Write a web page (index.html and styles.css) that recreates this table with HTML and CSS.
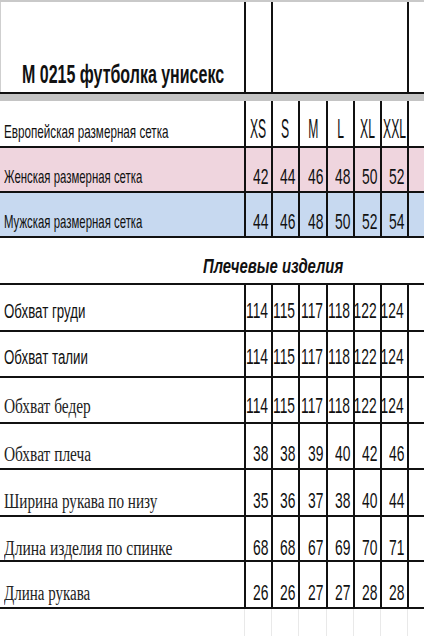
FILE: index.html
```html
<!DOCTYPE html>
<html lang="ru">
<head>
<meta charset="utf-8">
<title>М 0215 футболка унисекс</title>
<link rel="stylesheet" href="styles.css">
</head>
<body>
<div class="sheet">
  <div class="row title-row">
    <div class="cell title-cell"><span class="t title">М 0215 футболка унисекс</span></div>
    <div class="cell vline"></div>
    <div class="cell vline span5"></div>
    <div class="cell vline"></div>
  </div>
  <div class="band"></div>

  <div class="row h47 o-eu">
    <div class="cell lab-cell"><span class="t lab w-eu">Европейская размерная сетка</span></div>
    <div class="cell sz-cell"><span class="t sz">XS</span></div>
    <div class="cell sz-cell"><span class="t sz">S</span></div>
    <div class="cell sz-cell"><span class="t sz">M</span></div>
    <div class="cell sz-cell"><span class="t sz">L</span></div>
    <div class="cell sz-cell"><span class="t sz">XL</span></div>
    <div class="cell sz-cell"><span class="t sz">XXL</span></div>
    <div class="cell vline"></div>
  </div>

  <div class="row h45 pink o7">
    <div class="cell lab-cell"><span class="t lab">Женская размерная сетка</span></div>
    <div class="cell num"><span class="t n">42</span></div>
    <div class="cell num"><span class="t n">44</span></div>
    <div class="cell num"><span class="t n">46</span></div>
    <div class="cell num"><span class="t n">48</span></div>
    <div class="cell num"><span class="t n">50</span></div>
    <div class="cell num"><span class="t n">52</span></div>
    <div class="cell vline"></div>
  </div>

  <div class="row h45 blue o7">
    <div class="cell lab-cell"><span class="t lab">Мужская размерная сетка</span></div>
    <div class="cell num"><span class="t n">44</span></div>
    <div class="cell num"><span class="t n">46</span></div>
    <div class="cell num"><span class="t n">48</span></div>
    <div class="cell num"><span class="t n">50</span></div>
    <div class="cell num"><span class="t n">52</span></div>
    <div class="cell num"><span class="t n">54</span></div>
    <div class="cell vline"></div>
  </div>

  <div class="row h47 section">
    <div class="cell section-cell"><span class="t sec">Плечевые изделия</span></div>
  </div>

  <div class="row h47 o3">
    <div class="cell lab-cell"><span class="t lab2">Обхват груди</span></div>
    <div class="cell num"><span class="t n">114</span></div>
    <div class="cell num"><span class="t n">115</span></div>
    <div class="cell num"><span class="t n">117</span></div>
    <div class="cell num"><span class="t n">118</span></div>
    <div class="cell num"><span class="t n">122</span></div>
    <div class="cell num"><span class="t n">124</span></div>
    <div class="cell vline"></div>
  </div>

  <div class="row h46 o3">
    <div class="cell lab-cell"><span class="t lab2">Обхват талии</span></div>
    <div class="cell num"><span class="t n">114</span></div>
    <div class="cell num"><span class="t n">115</span></div>
    <div class="cell num"><span class="t n">117</span></div>
    <div class="cell num"><span class="t n">118</span></div>
    <div class="cell num"><span class="t n">122</span></div>
    <div class="cell num"><span class="t n">124</span></div>
    <div class="cell vline"></div>
  </div>

  <div class="row h46 o6">
    <div class="cell lab-cell"><span class="t serif">Обхват бедер</span></div>
    <div class="cell num"><span class="t n">114</span></div>
    <div class="cell num"><span class="t n">115</span></div>
    <div class="cell num"><span class="t n">117</span></div>
    <div class="cell num"><span class="t n">118</span></div>
    <div class="cell num"><span class="t n">122</span></div>
    <div class="cell num"><span class="t n">124</span></div>
    <div class="cell vline"></div>
  </div>

  <div class="row h46 o8">
    <div class="cell lab-cell"><span class="t serif">Обхват плеча</span></div>
    <div class="cell num"><span class="t n">38</span></div>
    <div class="cell num"><span class="t n">38</span></div>
    <div class="cell num"><span class="t n">39</span></div>
    <div class="cell num"><span class="t n">40</span></div>
    <div class="cell num"><span class="t n">42</span></div>
    <div class="cell num"><span class="t n">46</span></div>
    <div class="cell vline"></div>
  </div>

  <div class="row h47 o8">
    <div class="cell lab-cell"><span class="t serif w-shirina">Ширина рукава по низу</span></div>
    <div class="cell num"><span class="t n">35</span></div>
    <div class="cell num"><span class="t n">36</span></div>
    <div class="cell num"><span class="t n">37</span></div>
    <div class="cell num"><span class="t n">38</span></div>
    <div class="cell num"><span class="t n">40</span></div>
    <div class="cell num"><span class="t n">44</span></div>
    <div class="cell vline"></div>
  </div>

  <div class="row h45 o9">
    <div class="cell lab-cell"><span class="t serif w-dlina">Длина изделия по спинке</span></div>
    <div class="cell num"><span class="t n">68</span></div>
    <div class="cell num"><span class="t n">68</span></div>
    <div class="cell num"><span class="t n">67</span></div>
    <div class="cell num"><span class="t n">69</span></div>
    <div class="cell num"><span class="t n">70</span></div>
    <div class="cell num"><span class="t n">71</span></div>
    <div class="cell vline"></div>
  </div>

  <div class="row h47 o8">
    <div class="cell lab-cell"><span class="t serif w-rukav">Длина рукава</span></div>
    <div class="cell num"><span class="t n">26</span></div>
    <div class="cell num"><span class="t n">26</span></div>
    <div class="cell num"><span class="t n">27</span></div>
    <div class="cell num"><span class="t n">27</span></div>
    <div class="cell num"><span class="t n">28</span></div>
    <div class="cell num"><span class="t n">28</span></div>
    <div class="cell vline"></div>
  </div>

  <div class="row faint">
    <div class="cell"></div>
    <div class="cell fline"></div>
    <div class="cell fline"></div>
    <div class="cell fline"></div>
    <div class="cell fline"></div>
    <div class="cell fline"></div>
    <div class="cell fline"></div>
    <div class="cell fline"></div>
  </div>
</div>
</body>
</html>
```

FILE: styles.css
```css
html, body {
  margin: 0;
  padding: 0;
  background: #ffffff;
}

.sheet {
  width: 424px;
  height: 636px;
  overflow: hidden;
  font-family: "Liberation Sans", Arial, sans-serif;
  color: #111111;
}

.row {
  display: grid;
  grid-template-columns: 244px 27px 27px 28px 27px 27px 27px 1fr;
  border-bottom: 2px solid #111111;
  box-sizing: border-box;
}

.h45 { height: 45px; }
.h46 { height: 46px; }
.h47 { height: 47px; }

.cell {
  display: flex;
  align-items: center;
  min-width: 0;
  box-sizing: border-box;
}

.vline { border-left: 2px solid #111111; }

.span5 { grid-column: span 5; }

.t {
  display: inline-block;
  white-space: nowrap;
  line-height: 1;
  transform-origin: left center;
}

/* title row */
.title-row {
  height: 94px;
  border-top: 2px solid #c9c9c9;
}
.title-cell {
  align-items: flex-end;
  padding: 0 0 5px 21px;
  border-left: 1px solid #cfcfcf;
}
.title {
  font-size: 26px;
  font-weight: bold;
  transform: scaleX(0.615);
}

.band {
  height: 7px;
  background: #c4c4c4;
}

/* labels */
.lab-cell { padding-left: 4px; }
.lab {
  font-size: 19px;
  transform: scaleX(0.6);
}
.lab.w-eu { transform: scaleX(0.615); }
.lab2 {
  font-size: 20px;
  transform: scaleX(0.665);
}
.serif {
  font-family: "Liberation Serif", "Times New Roman", serif;
  font-size: 20px;
  color: #222222;
  transform: scaleX(0.77);
}
.serif.w-shirina { transform: scaleX(0.76); }
.serif.w-dlina { transform: scaleX(0.78); }
.serif.w-rukav { transform: scaleX(0.75); }

/* size letters */
.sz-cell {
  border-left: 2px solid #111111;
  justify-content: center;
}
.sz {
  font-size: 27px;
  transform: scaleX(0.45);
  transform-origin: center center;
}

/* numbers */
.num {
  border-left: 2px solid #111111;
  justify-content: flex-end;
  padding-right: 3px;
}
.n {
  font-size: 22px;
  transform: scaleX(0.63);
  transform-origin: right center;
}

/* vertical offsets of the text inside rows */
.o-eu .lab-cell { padding-top: 16px; }
.o-eu .sz-cell { padding-top: 12px; }
.o7 .cell { padding-top: 14px; }
.o3 .cell { padding-top: 6px; }
.o6 .cell { padding-top: 12px; }
.o8 .cell { padding-top: 16px; }
.o9 .cell { padding-top: 18px; }

.pink { background: #efd5de; }
.blue { background: #c7d9f0; }

/* section heading */
.section-cell {
  grid-column: 1 / -1;
  padding: 10px 0 0 203px;
}
.sec {
  font-size: 21px;
  font-weight: bold;
  font-style: italic;
  transform: scaleX(0.71);
}

/* faint gridlines below the table */
.faint {
  height: 27px;
  border-bottom: none;
}
.fline { border-left: 1px solid #e9e9e9; }
```
